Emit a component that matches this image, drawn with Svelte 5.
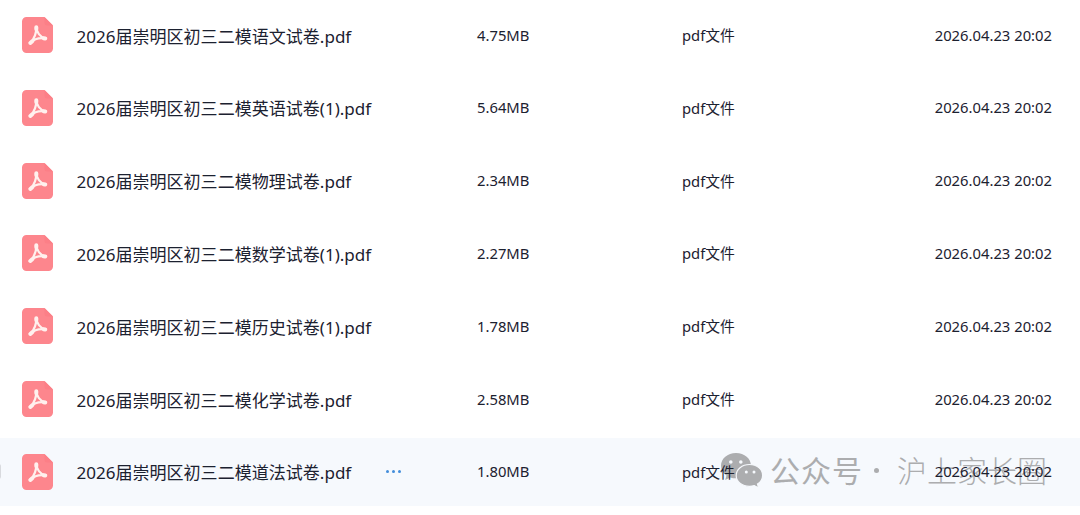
<script>
  const date = '2026.04.23 20:02';
  const type = 'pdf文件';

  let files = [
    { name: '2026届崇明区初三二模语文试卷.pdf', size: '4.75MB' },
    { name: '2026届崇明区初三二模英语试卷(1).pdf', size: '5.64MB' },
    { name: '2026届崇明区初三二模物理试卷.pdf', size: '2.34MB' },
    { name: '2026届崇明区初三二模数学试卷(1).pdf', size: '2.27MB' },
    { name: '2026届崇明区初三二模历史试卷(1).pdf', size: '1.78MB' },
    { name: '2026届崇明区初三二模化学试卷.pdf', size: '2.58MB' },
    { name: '2026届崇明区初三二模道法试卷.pdf', size: '1.80MB', active: true }
  ];
</script>

<div class="file-list">
  {#each files as file}
    <div class="row" class:active={file.active}>
      <svg class="file-icon" viewBox="0 0 31 36">
        <path d="M4.500 0H22.500L31 8.500V31.500a4.500 4.500 0 0 1-4.500 4.500h-22A4.500 4.500 0 0 1 0 31.500v-27A4.500 4.500 0 0 1 4.500 0z" fill="#fd868d" />
        <path d="M22.500 0l8.500 8.500h-6A2.500 2.500 0 0 1 22.500 6z" fill="#fc7f87" />
        <g fill="none" stroke="#fff1ee" stroke-linecap="round" stroke-linejoin="round">
          <path d="M14.300 10.300C14.500 15 18 20 23.300 21.500C17 20.500 12 22.300 8.300 26C12 22 14.500 16.500 14.300 10.300z" stroke-width="2.200" />
          <path d="M14.300 10.200v2M23.300 21.500l-1.800-.3M8.300 26l2-1.700" stroke-width="4" />
        </g>
      </svg>
      <div class="name">
        <span>{file.name}</span>
        {#if file.active}
          <span class="more"><i></i><i></i><i></i></span>
        {/if}
      </div>
      <div class="size">{file.size}</div>
      <div class="type">{type}</div>
      <div class="date">{date}</div>
    </div>
  {/each}

  <span class="handle"></span>

  <!-- Account mark over the last row -->
  <div class="watermark">
    <svg viewBox="0 0 42 36">
      <path d="M15 0C6.500 0 0 5.700 0 12.700c0 4 2.200 7.500 5.500 9.800L4.200 27l5-2.600c1.900.6 3.800.9 5.800.9C23.500 25.300 30 19.700 30 12.700S23.500 0 15 0z" />
      <path class="front" d="M28.500 11.500c-7.500 0-13.300 4.800-13.300 10.900s5.800 10.900 13.300 10.900c1.700 0 3.300-.2 4.800-.7l4.400 2.400-1.200-4c3.100-2 5.100-5.100 5.100-8.600 0-6.100-5.600-10.900-13.100-10.900z" />
      <g class="eyes">
        <circle cx="9.800" cy="9" r="1.800" /><circle cx="19.800" cy="9" r="1.800" />
        <circle cx="25.300" cy="19" r="1.500" /><circle cx="33" cy="19" r="1.500" />
      </g>
    </svg>
    <span class="label">公众号</span>
    <span class="dot"></span>
    <span class="account">沪上家长圈</span>
  </div>
</div>

<style>
  :global(body) {
    background: #fff;
  }

  .file-list {
    position: relative;
    height: 515px;
    box-sizing: border-box;
    padding-top: 1.300px;
    overflow: hidden;
    color: #1c2130;
    font-family: "Noto Sans", "Noto Sans CJK SC", sans-serif;
    font-size: 14.8px;
  }

  .row {
    display: grid;
    grid-template-columns: 54.500px 400.500px 205px 1fr auto;
    align-items: center;
    height: 67.500px;
    margin-bottom: 5.300px;
    padding: 0 28px 0 22px;
    white-space: nowrap;
  }

  .row.active {
    background: #f6f9fd;
  }

  .file-icon {
    display: block;
    width: 31px;
    height: 36px;
  }

  .name {
    display: flex;
    align-items: center;
    font-size: 17.050px;
  }

  .more {
    display: flex;
    gap: 3px;
    margin-left: 35px;
  }

  .more i {
    width: 3px;
    height: 3px;
    border-radius: 50%;
    background: #438ddb;
  }

  .size,
  .type,
  .date,
  .name > span {
    position: relative;
    z-index: 1;
  }

  .size,
  .type,
  .date {
    padding-bottom: 1px;
  }

  .handle {
    position: absolute;
    left: -4px;
    top: 464px;
    width: 5px;
    height: 15px;
    border-radius: 3px;
    background: #d8dade;
  }

  .watermark {
    position: absolute;
    left: 721px;
    top: 450px;
    display: flex;
    align-items: center;
    height: 38px;
    color: #acadaf;
    font-family: "Noto Sans CJK SC", sans-serif;
    font-size: 30px;
    line-height: 38px;
    white-space: nowrap;
  }

  .watermark svg {
    width: 42px;
    height: 36px;
    margin-top: 4px;
    fill: #acadaf;
  }

  .watermark .front {
    stroke: #f6f9fd;
    stroke-width: 1.2;
  }

  .watermark .eyes {
    fill: #f6f9fd;
  }

  .label {
    margin-left: 7px;
    letter-spacing: 1px;
  }

  .dot {
    width: 5px;
    height: 5px;
    margin: 3px 17px 0 11px;
    border-radius: 50%;
    background: #acadaf;
  }

  .account {
    margin-left: 1px;
    font-weight: 300;
  }
</style>
